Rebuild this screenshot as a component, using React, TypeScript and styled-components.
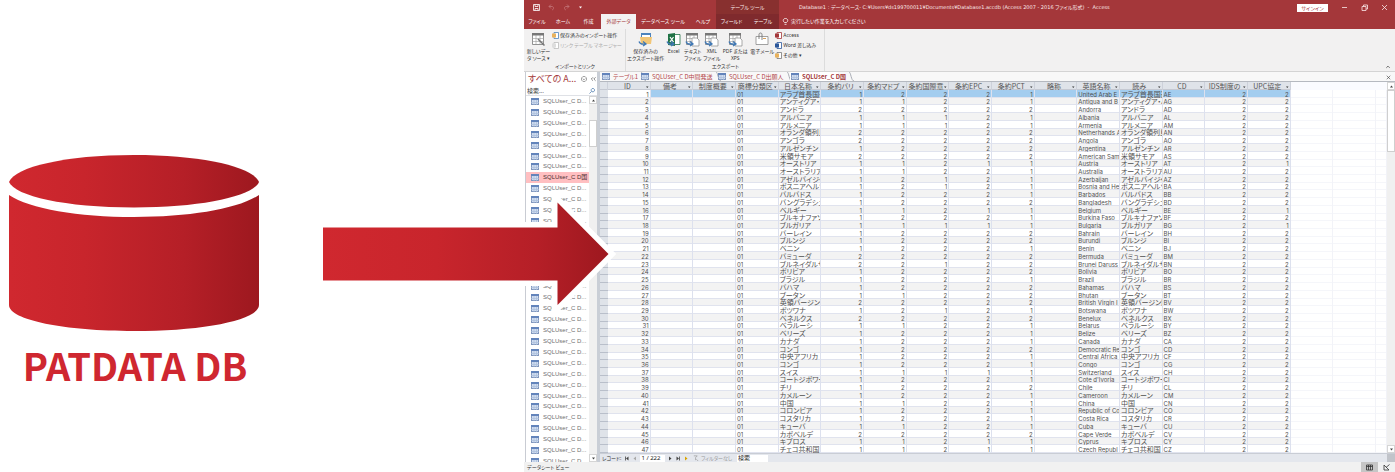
import React from "react";
import styled, { createGlobalStyle, css } from "styled-components";

const UI = `"Noto Sans", "Noto Sans CJK JP", sans-serif`;
const JP = `"Noto Sans CJK JP", sans-serif`;
const RED = "#a4373a";

const Global = createGlobalStyle`
  *, *::before, *::after { box-sizing: border-box; }
  body { margin: 0; background: #fff; }
  button, input { font: inherit; color: inherit; border: 0; padding: 0; margin: 0; background: none; }
  button { cursor: pointer; }
  svg { display: block; flex: none; }
`;

const Page = styled.div`
  display: grid;
  grid-template-columns: 524fr 871fr;
  min-height: 100vh;
  font-family: ${UI};
  font-size: 5px;
  line-height: 7px;
  font-feature-settings: "palt";
  color: #333;
`;

/* Left side: the source database and the arrow */
const Source = styled.section`
  position: relative;
  padding: 155px 0 0 9px;
`;
const SourceFigure = styled.figure`
  margin: 0;
  width: 252px;
`;
const SourceName = styled.figcaption`
  margin-top: 9px;
  font-family: ${JP};
  font-size: 38px;
  line-height: 48px;
  font-weight: 700;
  text-align: center;
  white-space: nowrap;
  color: #cf2730;
`;
const ArrowLayer = styled.div`
  position: absolute;
  z-index: 2;
  top: 180px;
  right: -96px;
  pointer-events: none;
`;

/* Application window */
const Window = styled.section`
  display: flex;
  flex-direction: column;
  min-width: 0;
  white-space: nowrap;
`;
const TitleBar = styled.header`
  display: grid;
  grid-template-columns: 192px 63px 1fr auto;
  height: 14px;
  align-items: center;
  background: ${RED};
  color: #fbe9e9;
`;
const QuickAccess = styled.div`
  display: flex;
  align-items: center;
  gap: 8px;
  padding-left: 9px;
`;
const ContextTitle = styled.div`
  align-self: stretch;
  text-align: center;
  line-height: 15px;
  background: #88302f;
`;
const WindowTitle = styled.div`
  padding-left: 20px;
  font-family: "DejaVu Sans", ${JP};
  white-space: pre;
`;
const WindowButtons = styled.div`
  display: flex;
  align-items: center;
  gap: 13px;
  padding-right: 7px;
`;
const SignIn = styled.button`
  width: 31px;
  height: 8px;
  line-height: 8px;
  background: #fff;
  color: ${RED};
`;
const IconButton = styled.button`
  display: grid;
  place-items: center;
`;

const Tabs = styled.nav`
  display: flex;
  height: 15px;
  background: ${RED};
  color: #fff;
`;
const Tab = styled.button<{ $w: number; $active?: boolean; $context?: boolean }>`
  flex: 0 0 ${(p) => p.$w}px;
  text-align: center;
  ${(p) => p.$context && css`background: #7f2a2d;`}
  ${(p) => p.$active && css`background: #f3f2f2; color: ${RED};`}
`;
const TellMe = styled.button`
  display: flex;
  align-items: center;
  gap: 2px;
  padding-left: 3px;
`;

const Ribbon = styled.div`
  display: flex;
  height: 43px;
  background: #f2f1f1;
  border-bottom: 1px solid #d4d4d4;
`;
const Group = styled.section<{ $w: number }>`
  flex: 0 0 ${(p) => p.$w}px;
  display: flex;
  flex-direction: column;
  justify-content: space-between;
  border-right: 1px solid #dcdcdc;
  padding: 3px 0 1px 1px;
`;
const GroupRow = styled.div`
  display: flex;
`;
const GroupName = styled.div`
  text-align: center;
`;
const BigCommand = styled.button<{ $w: number }>`
  flex: 0 0 ${(p) => p.$w}px;
  display: flex;
  flex-direction: column;
  align-items: center;
  gap: 1px;
`;
const CommandList = styled.div`
  display: flex;
  flex-direction: column;
  gap: 3px;
`;
const SmallCommand = styled.button`
  display: flex;
  align-items: center;
  gap: 1px;
  height: 7px;
  &:disabled { color: #aaa; }
`;
const Collapse = styled.button`
  margin: auto 4px 1px auto;
`;

const Body = styled.div`
  flex: 1;
  display: grid;
  grid-template-columns: 76px minmax(0, 1fr);
  min-height: 0;
`;

/* Navigation pane */
const Pane = styled.aside`
  display: grid;
  grid-template-columns: minmax(0, 1fr);
  grid-template-rows: 14px 10px 1fr;
  border-left: 1px solid #c9ccd3;
  border-right: 3px solid #c9ced6;
  margin-left: 1px;
  min-height: 0;
`;
const PaneHead = styled.div`
  display: flex;
  align-items: center;
  justify-content: space-between;
  padding: 0 1px 0 2px;
  color: ${RED};
`;
const PaneTitle = styled.h2`
  margin: 0;
  font-family: ${JP};
  font-size: 9px;
  line-height: 12px;
  font-weight: 400;
`;
const PaneTools = styled.span`
  display: flex;
  gap: 3px;
`;
const PaneSearch = styled.label`
  display: flex;
  align-items: center;
  border-bottom: 1px solid #dfe1e6;
  padding: 0 2px 0 1px;
`;
const PaneInput = styled.input`
  flex: 1;
  min-width: 0;
  height: 8px;
  font-size: 6px;
  &::placeholder { color: #333; opacity: 1; }
`;
const PaneScroll = styled.div`
  display: grid;
  grid-template-columns: minmax(0, 1fr) 8px;
  overflow: hidden;
`;
const ObjectList = styled.ul`
  list-style: none;
  margin: 0 0 -5px;
  padding: 0;
  display: grid;
  grid-auto-rows: 1fr;
`;
const ObjectItem = styled.li<{ $selected: boolean }>`
  display: flex;
  align-items: center;
  gap: 4px;
  padding-left: 5px;
  font-family: "Liberation Sans", ${JP};
  font-size: 6px;
  color: #707070;
  ${(p) => p.$selected && css`background: #ffbfc1; color: #4b3032;`}
`;
const ScrollTrack = styled.div`
  display: flex;
  flex-direction: column;
  align-items: stretch;
  background: #f0f0f0;
`;
const ScrollArrow = styled.button`
  display: grid;
  place-items: center;
  height: 8px;
  background: #fff;
  border: 1px solid #d5d5d5;
`;
const Thumb = styled.div<{ $top: number; $h: number }>`
  height: ${(p) => p.$h}px;
  margin: ${(p) => p.$top}px 0 auto;
  background: #fff;
  border: 1px solid #cfcfcf;
`;

/* Datasheet */
const Main = styled.main`
  display: grid;
  grid-template-columns: minmax(0, 1fr);
  grid-template-rows: 10px 1fr 9px;
  min-height: 0;
`;
const DocTabs = styled.div`
  display: flex;
  background: #f8f8f8;
  border-bottom: 1px solid #b5b9c0;
  padding-left: 1px;
`;
const DocTab = styled.button<{ $w: number; $active?: boolean }>`
  flex: 0 0 ${(p) => p.$w}px;
  min-width: 0;
  display: flex;
  align-items: center;
  gap: 3px;
  padding-left: 1px;
  font-family: ${JP};
  font-size: 6px;
  color: #b5484b;
  ${(p) => p.$active && css`color: ${RED}; font-weight: 700; background: linear-gradient(90deg, #fff 48px, #f8f8f8 48px);`}
`;
const Sheet = styled.div`
  display: grid;
  grid-template-columns: minmax(0, 1fr) 8px;
  min-height: 0;
`;
const rowGrid = css`
  display: grid;
  grid-template-columns: 8px repeat(18, 100fr) 26fr;
`;
const Table = styled.table`
  display: grid;
  grid-template-rows: 8px 1fr;
  min-width: 0;
  font-family: ${JP};
  font-size: 7px;
  line-height: 7px;
`;
const THead = styled.thead`
  display: grid;
`;
const TBody = styled.tbody`
  display: grid;
  grid-auto-rows: 1fr;
`;
const HeadRow = styled.tr`
  ${rowGrid}
  background: #fafbff;
`;
const HeadCell = styled.th`
  display: flex;
  align-items: center;
  padding: 0 1px;
  min-width: 0;
  font-weight: 400;
  color: #555;
  background: #dfe3e9;
  border-right: 1px solid #cdd1da;
  box-shadow: inset 0 -1px #c5c9d2;
  overflow: hidden;
`;
const HeadLabel = styled.span`
  flex: 1;
  min-width: 0;
  line-height: 8px;
  overflow: hidden;
  text-align: center;
`;
const Row = styled.tr`
  ${rowGrid}
`;
const Cell = styled.td<{ $align?: "right"; $fill: string; $latin?: boolean }>`
  display: flex;
  align-items: flex-end;
  justify-content: ${(p) => (p.$align ? "flex-end" : "flex-start")};
  padding: ${(p) => (p.$align ? "0 1px" : "0 0 0 1px")};
  overflow: hidden;
  min-width: 0;
  color: #505050;
  background: ${(p) => p.$fill};
  border-right: 1px solid #dde1ee;
  box-shadow: inset 0 -1px #e0e3ee;
  ${(p) => p.$latin && css`font-family: Inter, sans-serif; font-size: 6px;`}
`;
const RowHead = styled.td`
  padding: 0;
  background: #dfe3e9;
  box-shadow: inset 0 -1px #b9bfca;
`;
const Blank = styled.td`
  padding: 0;
  border-right: 1px solid #f2f3f8;
  box-shadow: inset 0 -1px #f5f6fa;
`;

const RecordBar = styled.div`
  display: flex;
  align-items: center;
  border-top: 1px solid #c9cdd5;
  background: #e4e7ed;
  padding-left: 2px;
`;
const RecordNav = styled.div`
  display: flex;
  align-items: center;
  gap: 3px;
  width: 86px;
`;
const RecordInput = styled.input<{ $w: number }>`
  width: ${(p) => p.$w}px;
  height: 7px;
  padding-left: 1px;
  font-size: 6px;
  background: #fff;
  color: #222;
  &::placeholder { color: #222; opacity: 1; }
`;
const FilterState = styled.span`
  display: flex;
  gap: 2px;
  width: 49px;
  padding-left: 5px;
  color: #999;
`;
const Corner = styled.span`
  align-self: stretch;
  width: 8px;
  margin-left: auto;
  background: #c1c4ca;
`;
const StatusBar = styled.footer`
  display: flex;
  align-items: center;
  justify-content: space-between;
  height: 10px;
  padding-left: 3px;
  background: #f1f1f1;
`;
const Views = styled.div`
  display: flex;
  height: 10px;
`;
const ViewButton = styled.button<{ $on?: boolean }>`
  display: grid;
  place-items: center;
  width: 17px;
  background: ${(p) => (p.$on ? "#c6c6c6" : "transparent")};
`;

const Cylinder = () => (
  <svg width="250" height="177" viewBox="0 0 250 177" aria-hidden="true">
    <defs>
      <linearGradient id="drum" x1="0" x2="250" y1="0" y2="0" gradientUnits="userSpaceOnUse">
        <stop offset="0" stopColor="#d0282f" />
        <stop offset="0.3" stopColor="#c8252c" />
        <stop offset="0.7" stopColor="#b51f27" />
        <stop offset="1" stopColor="#9d181f" />
      </linearGradient>
    </defs>
    <path d="M0 27C6 12 56 0 125 0s119 12 125 27c-6 14-56 25.500-125 25.500S6 41 0 27Z" fill="url(#drum)" />
    <path d="M0 40c21 14 69 22 125 22s104-8 125-22v110c0 15-56 26-125 26S0 165 0 150Z" fill="url(#drum)" />
  </svg>
);

const Arrow = () => (
  <svg width="300" height="150" viewBox="320 180 300 150" aria-hidden="true">
    <defs>
      <linearGradient id="shaft" x1="323" x2="609" y1="0" y2="0" gradientUnits="userSpaceOnUse">
        <stop offset="0" stopColor="#d0282f" />
        <stop offset="0.4" stopColor="#c8252c" />
        <stop offset="0.75" stopColor="#b51f27" />
        <stop offset="1" stopColor="#9d181f" />
      </linearGradient>
    </defs>
    <path
      d="M323 227.500H557.500V202.500L608.500 254 557.500 305V280.500H323Z"
      fill="url(#shaft)"
      stroke="#fff"
      strokeWidth="11"
      strokeMiterlimit="10"
      paintOrder="stroke"
    />
  </svg>
);

const TableIcon = () => (
  <svg width="8" height="7" viewBox="0 0 8 7" aria-hidden="true">
    <rect x="0.500" y="0.500" width="7" height="6" fill="#cfdcf0" stroke="#8297bd" />
    <path d="M0 0h8v2H0z" fill="#6384bb" />
    <path d="M3 2v5M5.500 2v5M0 4.500h8" stroke="#a9bdda" strokeWidth="0.700" />
  </svg>
);

type Kind = "grid" | "folder" | "excel" | "doc" | "mail";
const BigIcon = ({ kind }: { kind: Kind }) => (
  <svg width="15" height="15" viewBox="0 0 15 15" aria-hidden="true">
    {kind === "folder" && (
      <>
        <path d="M3 1h10v4H3z" fill="#4d84bd" />
        <path d="M4 3h8v2H4z" fill="#fff" />
        <path d="M2 5h12l-1 7H3z" fill="#f2c677" />
      </>
    )}
    {kind === "mail" && (
      <>
        <path d="M1 4.500h12v8H1z" fill="#fff" stroke="#8a8a8a" strokeWidth="0.800" />
        <path d="M8 6.500h3" stroke="#d9a25d" />
        <path d="M4 7V2.500c0-2 3-2 3 0V8" fill="none" stroke="#777" strokeWidth="0.900" />
      </>
    )}
    {kind === "excel" && (
      <>
        <path d="M8 2.500h6v10H8z" fill="#fff" stroke="#217346" strokeWidth="0.800" />
        <path d="M2 2l7-1v13l-7-1z" fill="#217346" />
        <path d="M4 5l3.500 5M7.500 5L4 10" stroke="#fff" strokeWidth="1.200" />
      </>
    )}
    {(kind === "grid" || kind === "doc") && (
      <>
        <path d="M1.500 1.500h11v11h-11z" fill="#fff" stroke="#777" strokeWidth="0.800" />
        <path d="M1 1h12v2.500H1z" fill="#777" />
        <path d="M5 3v9M9 3v9M1 6.500h12M1 9.500h12" stroke="#999" strokeWidth="0.600" />
      </>
    )}
    {kind === "grid" && <path d="M7 7l6.500 6.500" stroke="#777" strokeWidth="1.500" />}
    {kind === "doc" && <path d="M7 6h5l2 2v6H7z" fill="#fff" stroke="#888" strokeWidth="0.700" />}
    {kind !== "grid" && kind !== "mail" && (
      <path d="M1 9.500c1 3 3 3 6 2.500M5 9.500l3 2.500-3 2" fill="none" stroke="#3f78b5" strokeWidth="1.300" />
    )}
  </svg>
);

const SmallIcon = ({ main, accent }: { main: string; accent: string }) => (
  <svg width="7" height="7" viewBox="0 0 7 7" aria-hidden="true">
    <path d="M2 0.500h4.500v6H2z" fill="#fff" stroke={accent} strokeWidth="0.800" />
    <path d="M0 1.500h4v4H0z" fill={main} />
  </svg>
);

const Tri = ({ dir, color = "#444" }: { dir: "up" | "down" | "left" | "right" | "first" | "last"; color?: string }) => {
  const d = {
    up: "M1 3.500h3L2.500 1.500z",
    down: "M1 1.500h3L2.500 3.500z",
    left: "M4 0.500v4L1.500 2.500z",
    right: "M1 0.500v4L3.500 2.500z",
    first: "M4.500 0.500v4L2 2.500zM1 0.500h0.800v4H1z",
    last: "M0.500 0.500v4L3 2.500zM3.200 0.500H4v4H3.200z",
  }[dir];
  return (
    <svg width="5" height="5" viewBox="0 0 5 5" aria-hidden="true">
      <path d={d} fill={color} />
    </svg>
  );
};

const SortMark = () => (
  <svg width="3" height="4" viewBox="0 0 3 4" aria-hidden="true">
    <path d="M0 2.500h2.500L1.250 4z" fill="#333" />
  </svg>
);

const Line = ({ d, size = 7, color = "currentColor" }: { d: string; size?: number; color?: string }) => (
  <svg width={size} height={size} viewBox="0 0 7 7" fill="none" stroke={color} strokeWidth="0.800" aria-hidden="true">
    <path d={d} />
  </svg>
);

const Slope = () => (
  <svg width="5" height="9" viewBox="0 0 5 9" aria-hidden="true">
    <path d="M0 0c2 0 2 9 5 9" fill="none" stroke="#a9adb5" />
  </svg>
);

const columns = [
  "ID", "備考", "制度概要", "商標分類区", "日本名称", "条約バリ", "条約マドプ", "条約国際意",
  "条約EPC", "条約PCT", "略称", "英語名称", "読み", "CD", "IDS制度の", "UPC協定",
];

/* Japanese name, the five treaty flags, English name, country code */
const countries: [string, string, string, string][] = [
  ["アラブ首長国連", "12221", "United Arab E", "AE"],
  ["アンティグア・バ", "11221", "Antigua and B", "AG"],
  ["アンドラ", "22222", "Andorra", "AD"],
  ["アルバニア", "11121", "Albania", "AL"],
  ["アルメニア", "11121", "Armenia", "AM"],
  ["オランダ領列島", "22222", "Netherhands A", "AN"],
  ["アンゴラ", "22222", "Angola", "AO"],
  ["アルゼンチン", "12222", "Argentina", "AR"],
  ["米領サモア", "22222", "American Sam", "AS"],
  ["オーストリア", "11211", "Austria", "AT"],
  ["オーストラリア", "11221", "Australia", "AU"],
  ["アゼルバイジャ", "12121", "Azerbaijan", "AZ"],
  ["ボスニアヘルツ", "12121", "Bosnia and He", "BA"],
  ["バルバドス", "12221", "Barbados", "BB"],
  ["バングラデシュ", "12222", "Bangladesh", "BD"],
  ["ベルギー", "11211", "Belgium", "BE"],
  ["ブルキナファソ", "12221", "Burkina Faso", "BF"],
  ["ブルガリア", "11111", "Bulgaria", "BG"],
  ["バーレイン", "12222", "Bahrain", "BH"],
  ["ブルンジ", "12222", "Burundi", "BI"],
  ["ベニン", "12221", "Benin", "BJ"],
  ["バミューダ", "22222", "Bermuda", "BM"],
  ["ブルネイダルサ", "22122", "Brunei Daruss", "BN"],
  ["ボリビア", "12222", "Bolivia", "BO"],
  ["ブラジル", "12221", "Brazil", "BR"],
  ["バハマ", "12222", "Bahamas", "BS"],
  ["ブータン", "11222", "Bhutan", "BT"],
  ["英領バージン諸", "22222", "British Virgin I", "BV"],
  ["ボツワナ", "12121", "Botswana", "BW"],
  ["ベネルクス", "22222", "Benelux", "BX"],
  ["ベラルーシ", "11221", "Belarus", "BY"],
  ["ベリーズ", "12221", "Belize", "BZ"],
  ["カナダ", "12221", "Canada", "CA"],
  ["コンゴ", "12222", "Democratic Re", "CD"],
  ["中央アフリカ", "12221", "Central Africa", "CF"],
  ["コンゴ", "12221", "Congo", "CG"],
  ["スイス", "11111", "Switzerland", "CH"],
  ["コートジボワー", "12221", "Cote d'Ivoria", "CI"],
  ["チリ", "12222", "Chile", "CL"],
  ["カメルーン", "12221", "Cameroon", "CM"],
  ["中国", "11221", "China", "CN"],
  ["コロンビア", "12221", "Republic of Co", "CO"],
  ["コスタリカ", "12221", "Costa Rica", "CR"],
  ["キューバ", "11221", "Cuba", "CU"],
  ["カボベルデ", "22222", "Cape Verde", "CV"],
  ["キプロス", "11211", "Cyprus", "CY"],
  ["チェコ共和国", "11211", "Czech Republ", "CZ"],
];
const upcMembers = ["AT", "BE", "BG"];

const objects = Array.from({ length: 34 }, (_, i) => (i === 7 ? "SQLUser_C D国" : "SQLUser_C D..."));

const CountryRow = ({ index }: { index: number }) => {
  const [name, flags, english, code] = countries[index];
  const stripe = index % 2 ? "#f3f3f3" : "#fff";
  const fill = index === 0 ? "#a3cdef" : stripe;
  return (
    <Row>
      <RowHead />
      <Cell $fill={stripe} $align="right" $latin>{index + 1}</Cell>
      <Cell $fill={fill} />
      <Cell $fill={fill} />
      <Cell $fill={fill} $latin>01</Cell>
      <Cell $fill={fill}>{name}</Cell>
      {flags.split("").map((flag, i) => (
        <Cell key={i} $fill={fill} $align="right" $latin>{flag}</Cell>
      ))}
      <Cell $fill={fill} />
      <Cell $fill={fill} $latin>{english}</Cell>
      <Cell $fill={fill}>{name}</Cell>
      <Cell $fill={fill} $latin>{code}</Cell>
      <Cell $fill={fill} $align="right" $latin>2</Cell>
      <Cell $fill={fill} $align="right" $latin>{upcMembers.includes(code) ? 1 : 2}</Cell>
      <Blank />
      <Blank />
      <Blank />
    </Row>
  );
};

export default function App() {
  return (
    <Page>
      <Global />
      <Source>
        <SourceFigure>
          <Cylinder />
          <SourceName>PATDATA DB</SourceName>
        </SourceFigure>
        <ArrowLayer><Arrow /></ArrowLayer>
      </Source>

      <Window>
        <TitleBar>
          <QuickAccess>
            <IconButton aria-label="Save"><Line d="M0.500 0.500h6v6h-6zM2 0.500v2h3v-2M2 6.500v-2h3v2" color="#fff" /></IconButton>
            <IconButton aria-label="Undo"><Line d="M3 0.500l-2 2 2 2M1 2.500h3c2 0 2 3 0 3.500" color="#c4767a" /></IconButton>
            <IconButton aria-label="Redo"><Line d="M4 0.500l2 2-2 2M6 2.500H3c-2 0-2 3 0 3.500" color="#c4767a" /></IconButton>
            <IconButton aria-label="Customize"><Tri dir="down" color="#fff" /></IconButton>
          </QuickAccess>
          <ContextTitle>テーブル ツール</ContextTitle>
          <WindowTitle>Database1 : データベース- C:¥Users¥ds199700011¥Documents¥Database1.accdb (Access 2007 - 2016 ファイル形式)  -  Access</WindowTitle>
          <WindowButtons>
            <SignIn>サインイン</SignIn>
            <IconButton aria-label="Minimize"><Line d="M1 3.500h5" /></IconButton>
            <IconButton aria-label="Restore"><Line d="M1 2.500h4v4H1zM2.500 2.500v-1.500h4v4H5" /></IconButton>
            <IconButton aria-label="Close"><Line d="M1 1l5 5M6 1L1 6" /></IconButton>
          </WindowButtons>
        </TitleBar>

        <Tabs>
          <Tab $w={26}>ファイル</Tab>
          <Tab $w={26}>ホーム</Tab>
          <Tab $w={25}>作成</Tab>
          <Tab $w={35} $active>外部データ</Tab>
          <Tab $w={54}>データベース ツール</Tab>
          <Tab $w={26}>ヘルプ</Tab>
          <Tab $w={31} $context>フィールド</Tab>
          <Tab $w={32} $context>テーブル</Tab>
          <TellMe>
            <Line d="M2.500 4.500C0.500 3 1 0.500 3.500 0.500S6.500 3 4.500 4.500zM2.500 6.300h2" />
            実行したい作業を入力してください
          </TellMe>
        </Tabs>

        <Ribbon>
          <Group $w={102}>
            <GroupRow>
              <BigCommand $w={27}>
                <BigIcon kind="grid" />
                <span>新しいデー<br />タ ソース ▾</span>
              </BigCommand>
              <CommandList>
                <SmallCommand><SmallIcon main="#e9b25c" accent="#4d84bd" />保存済みのインポート操作</SmallCommand>
                <SmallCommand disabled><SmallIcon main="#ddd" accent="#bbb" />リンク テーブル マネージャー</SmallCommand>
              </CommandList>
            </GroupRow>
            <GroupName>インポートとリンク</GroupName>
          </Group>
          <Group $w={199}>
            <GroupRow>
              <BigCommand $w={37}><BigIcon kind="folder" /><span>保存済みの<br />エクスポート操作</span></BigCommand>
              <BigCommand $w={19}><BigIcon kind="excel" /><span>Excel</span></BigCommand>
              <BigCommand $w={19}><BigIcon kind="doc" /><span>テキスト<br />ファイル</span></BigCommand>
              <BigCommand $w={19}><BigIcon kind="doc" /><span>XML<br />ファイル</span></BigCommand>
              <BigCommand $w={28}><BigIcon kind="doc" /><span>PDF または<br />XPS</span></BigCommand>
              <BigCommand $w={26}><BigIcon kind="mail" /><span>電子メール</span></BigCommand>
              <CommandList>
                <SmallCommand><SmallIcon main={RED} accent={RED} />Access</SmallCommand>
                <SmallCommand><SmallIcon main="#2b579a" accent="#2b579a" />Word 差し込み</SmallCommand>
                <SmallCommand><SmallIcon main="#e9b25c" accent="#777" />その他 ▾</SmallCommand>
              </CommandList>
            </GroupRow>
            <GroupName>エクスポート</GroupName>
          </Group>
          <Collapse aria-label="Collapse ribbon"><Line d="M1.500 4.500l2-2 2 2" size={6} /></Collapse>
        </Ribbon>

        <Body>
          <Pane>
            <PaneHead>
              <PaneTitle>すべての A...</PaneTitle>
              <PaneTools>
                <Line d="M3.500 0.500a3 3 0 1 0 0.010 0M2 3l1.500 1.500L5 3" size={6} color="#777" />
                <Line d="M3.500 1.500l-2 2 2 2M6.500 1.500l-2 2 2 2" size={6} color="#555" />
              </PaneTools>
            </PaneHead>
            <PaneSearch>
              <PaneInput aria-label="検索" placeholder="検索..." />
              <Line d="M4.500 0.500a2 2 0 1 0 0.010 0M3 4L0.500 6.500" size={6} color="#3a6ea5" />
            </PaneSearch>
            <PaneScroll>
              <ObjectList>
                {objects.map((name, i) => (
                  <ObjectItem key={i} $selected={i === 7}><TableIcon />{name}</ObjectItem>
                ))}
              </ObjectList>
              <ScrollTrack>
                <ScrollArrow aria-label="Scroll up"><Tri dir="up" /></ScrollArrow>
                <Thumb $top={16} $h={27} />
                <ScrollArrow aria-label="Scroll down"><Tri dir="down" /></ScrollArrow>
              </ScrollTrack>
            </PaneScroll>
          </Pane>

          <Main>
            <DocTabs>
              <DocTab $w={39}><TableIcon />テーブル1<Slope /></DocTab>
              <DocTab $w={77}><TableIcon />SQLUser_C D中間発送<Slope /></DocTab>
              <DocTab $w={73}><TableIcon />SQLUser_C D出願人<Slope /></DocTab>
              <DocTab $w={63} $active><TableIcon />SQLUser_C D国<Slope /></DocTab>
              <Collapse aria-label="Close object"><Line d="M1 1l5 5M6 1L1 6" size={5} /></Collapse>
            </DocTabs>
            <Sheet>
              <Table>
                <THead>
                  <HeadRow>
                    <HeadCell aria-label="Select all" />
                    {columns.map((label) => (
                      <HeadCell key={label} scope="col">
                        <HeadLabel>{label}</HeadLabel>
                        <SortMark />
                      </HeadCell>
                    ))}
                  </HeadRow>
                </THead>
                <TBody>
                  {countries.map((_, i) => <CountryRow key={i} index={i} />)}
                </TBody>
              </Table>
              <ScrollTrack>
                <ScrollArrow aria-label="Scroll up"><Tri dir="up" /></ScrollArrow>
                <Thumb $top={0} $h={62} />
                <ScrollArrow aria-label="Scroll down"><Tri dir="down" /></ScrollArrow>
              </ScrollTrack>
            </Sheet>
            <RecordBar>
              <RecordNav>
                <span>レコード:</span>
                <Tri dir="first" />
                <Tri dir="left" color="#aaa" />
                <RecordInput $w={25} aria-label="レコード" defaultValue="1 / 222" />
                <Tri dir="right" />
                <Tri dir="last" />
                <Tri dir="right" color="#d9a400" />
              </RecordNav>
              <FilterState><Line d="M1 1h4L3 3v3M4 5l2 2" size={6} />フィルターなし</FilterState>
              <RecordInput $w={31} aria-label="レコード検索" placeholder="検索" />
              <Corner />
            </RecordBar>
          </Main>
        </Body>

        <StatusBar>
          <span>データシート ビュー</span>
          <Views>
            <ViewButton $on aria-label="Datasheet view"><Line d="M0.500 1h6v5h-6zM0.500 2.500h6M2.500 1v5M4.500 1v5" /></ViewButton>
            <ViewButton aria-label="Design view"><Line d="M1 1v5h5zM3 3.500L6.500 0.500" /></ViewButton>
          </Views>
        </StatusBar>
      </Window>
    </Page>
  );
}
